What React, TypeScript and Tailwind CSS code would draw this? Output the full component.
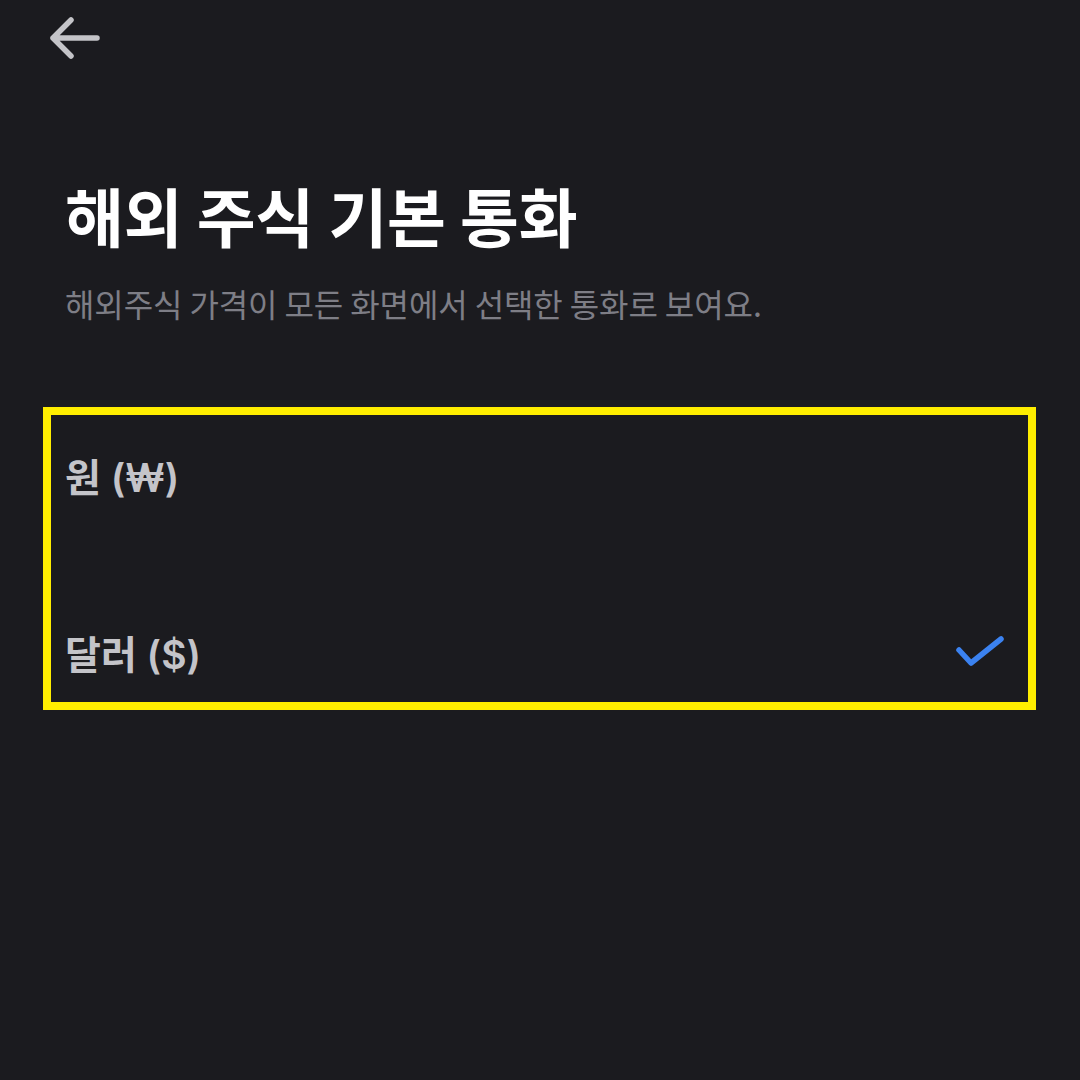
import React from 'react';

const font = { fontFamily: '"Noto Sans CJK KR", "Noto Sans", sans-serif' };

const BackArrow = () => (
  <svg width="56" height="48" viewBox="0 0 56 48" fill="none">
    <path
      d="M51 24H7M7 24L25 6M7 24L25 42"
      stroke="#c4c4c8"
      strokeWidth="5.5"
      strokeLinecap="round"
      strokeLinejoin="round"
    />
  </svg>
);

const Check = () => (
  <svg width="50" height="34" viewBox="0 0 50 34" fill="none" className="mb-[12px]">
    <path
      d="M4 16L16 29L46 5"
      stroke="#3b82f0"
      strokeWidth="5.5"
      strokeLinecap="round"
      strokeLinejoin="round"
    />
  </svg>
);

interface OptionRowProps {
  label: string;
  selected?: boolean;
  className?: string;
}

const OptionRow: React.FC<OptionRowProps> = ({ label, selected, className }) => (
  <div className={`flex items-center justify-between ${className ?? ''}`}>
    <span
      className="text-[39px] font-semibold text-[#c4c4c9] leading-[48px] mb-[5px]"
      style={{ fontFamily: 'Inter, "Noto Sans CJK KR", sans-serif' }}
    >
      {label}
    </span>
    {selected && <Check />}
  </div>
);

export default function App() {
  return (
    <div className="w-[1080px] h-[1080px] bg-[#1b1b1f] overflow-hidden" style={font}>
      <div className="pl-[46px] pt-[14px]">
        <BackArrow />
      </div>

      <div className="px-[65px] mt-[114px]">
        <h1 className="text-[64px] font-bold text-white leading-[76px] tracking-[-0.2px]">
          해외 주식 기본 통화
        </h1>
        <p className="mt-[31px] text-[32px] text-[#7e7e86] leading-[40px] tracking-[-0.1px]">
          해외주식 가격이 모든 화면에서 선택한 통화로 보여요.
        </p>
      </div>

      <div className="ml-[43px] mt-[84px] w-[993px] h-[303px] border-[8px] border-[#ffee00]">
        <div className="pl-[14px] pr-[23px] flex flex-col">
          <OptionRow label="원 (₩)" className="h-[130px]" />
          <OptionRow label="달러 ($)" selected className="h-[90px] mt-[67px]" />
        </div>
      </div>
    </div>
  );
}
